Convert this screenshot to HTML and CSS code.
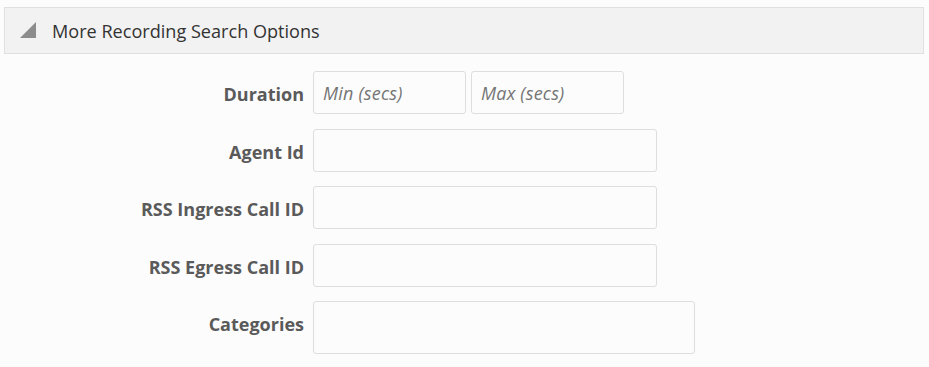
FILE: index.html
```html
<!DOCTYPE html>
<html>
<head>
<meta charset="utf-8">
<link rel="stylesheet" href="styles.css">
</head>
<body>
<div class="panel-header">
  <svg class="toggle-icon" width="16" height="16" viewBox="0 0 16 16"><polygon points="16,0 16,16 0,16" fill="#8c8c8c"/></svg>
  <span class="panel-title">More Recording Search Options</span>
</div>
<form class="search-form">
  <label class="field-label">Duration</label>
  <div class="field-pair">
    <input class="text-input short" type="text" placeholder="Min (secs)">
    <input class="text-input short" type="text" placeholder="Max (secs)">
  </div>
  <label class="field-label">Agent Id</label>
  <div><input class="text-input medium" type="text"></div>
  <label class="field-label">RSS Ingress Call ID</label>
  <div><input class="text-input medium" type="text"></div>
  <label class="field-label">RSS Egress Call ID</label>
  <div><input class="text-input medium" type="text"></div>
  <label class="field-label">Categories</label>
  <div><div class="text-input wide"></div></div>
</form>
</body>
</html>
```
FILE: styles.css
```css
html, body {
  margin: 0;
  padding: 0;
  background: #fcfcfc;
}
body {
  font-family: "Open Sans", "Liberation Sans", sans-serif;
  color: #333;
}
.panel-header {
  margin: 7px 5px 0 4px;
  height: 45px;
  border: 1px solid #e0e0e0;
  background: #f2f2f2;
  display: flex;
  align-items: center;
  padding-left: 15px;
}
.toggle-icon {
  display: block;
  margin-top: -2px;
}
.panel-title {
  margin-left: 16px;
  font-size: 18.1px;
  color: #333;
}
.search-form {
  display: grid;
  grid-template-columns: 304px auto;
  column-gap: 9px;
  row-gap: 14.5px;
  margin-top: 17px;
  align-items: start;
}
.field-label {
  text-align: right;
  font-weight: bold;
  font-size: 18px;
  color: #5a5a5a;
  padding-top: 12px;
  line-height: 22px;
  white-space: nowrap;
}
.field-pair {
  display: flex;
  gap: 5px;
}
.text-input {
  display: block;
  box-sizing: border-box;
  height: 43px;
  border: 1px solid #dedede;
  border-radius: 3px;
  background: #fcfcfc;
  padding: 0 9px;
  font-family: "Open Sans", "Liberation Sans", sans-serif;
  font-size: 18px;
  color: #333;
  outline: none;
}
.text-input::placeholder {
  font-style: italic;
  color: #757575;
  letter-spacing: 0.2px;
}
.short { width: 153px; }
.medium { width: 344px; }
.wide { width: 382px; height: 53px; }
```
